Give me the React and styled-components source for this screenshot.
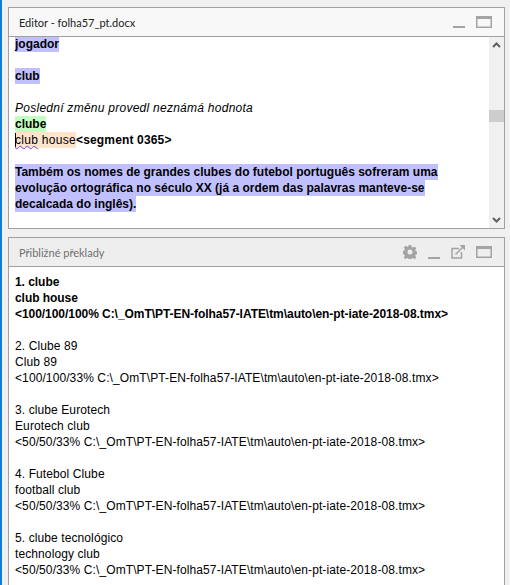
import styled, { createGlobalStyle } from 'styled-components';

const GlobalStyle = createGlobalStyle`
    html, body {
        margin: 0;
        padding: 0;
        background: #f0f0f0;
    }
`

const Page = styled.div`
    box-sizing: border-box;
    width: 510px;
    height: 585px;
    overflow: hidden;
    display: flex;
    flex-direction: column;
    gap: 8px;
    padding: 7px 5px 0 6px;
    border-left: 2px solid #0f7fd8;
    background: #f0f0f0;
    font-family: "Liberation Sans", Arial, sans-serif;
    font-size: 12px;
    color: #000;
`

const Panel = styled.section`
    box-sizing: border-box;
    flex: ${props => props.$grow ? '1 1 0' : '0 0 auto'};
    height: ${props => props.$height || 'auto'};
    display: flex;
    flex-direction: column;
    border: 1px solid #a0a0a0;
    border-bottom: ${props => props.$open ? 'none' : '1px solid #a0a0a0'};
    background: #fff;
    min-height: 0;
`

const PanelHeader = styled.header`
    box-sizing: border-box;
    flex: none;
    height: 29px;
    display: flex;
    align-items: center;
    padding: 0 12px 0 10px;
    border-bottom: 1px solid #a0a0a0;
    background: ${props => props.$active ? '#f8f8f8' : '#eeeeee'};
    color: ${props => props.$active ? '#222' : '#707070'};
    font-family: Lato, "Open Sans", sans-serif;
    font-size: 11px;
`

const PanelTitle = styled.span`
    flex: 1;
`

const Tools = styled.div`
    display: flex;
    align-items: center;
    gap: 11px;
`

const ToolIcon = styled.svg`
    display: block;
    flex: none;
    color: #a4a4a4;
`

const PanelBody = styled.div`
    flex: 1;
    min-height: 0;
    display: flex;
    overflow: hidden;
`

const EditorText = styled.div`
    flex: 1;
    margin-top: -1px;
    padding-left: 6px;
    line-height: 16px;
`

const Line = styled.div`
    height: 16px;
    white-space: nowrap;
    font-weight: ${props => props.$bold ? 700 : 400};
    font-style: ${props => props.$italic ? 'italic' : 'normal'};
    letter-spacing: ${props => props.$italic ? '0.26px' : '0'};
`

const Mark = styled.span`
    display: inline-block;
    height: 16px;
    background: ${props => props.$color};
`

const Current = styled.span`
    position: relative;
    display: inline-block;
    height: 16px;
    background: #ffe4cc;
    letter-spacing: 0.3px;
    &::before {
        content: '';
        position: absolute;
        left: 0;
        top: 1px;
        width: 1px;
        height: 14px;
        background: #000;
    }
`

const Misspelled = styled.span`
    text-decoration: underline wavy #6a50c0 1px;
`

const SegmentMarker = styled.b`
    letter-spacing: 0.15px;
`

const Gap = styled.div`
    height: 16px;
`

const Scrollbar = styled.div`
    flex: none;
    width: 15px;
    display: flex;
    flex-direction: column;
    justify-content: space-between;
    position: relative;
    background: #f0f0f0;
`

const Arrow = styled.svg`
    display: block;
    margin: 5px auto;
`

const Thumb = styled.div`
    position: absolute;
    left: 0;
    right: 0;
    top: ${props => props.$top}px;
    height: ${props => props.$height}px;
    background: #cdcdcd;
`

const MatchList = styled.div`
    flex: 1;
    padding: 7px 0 0 6px;
    line-height: 16px;
    white-space: nowrap;
    display: flex;
    flex-direction: column;
    gap: 16px;
`

const Match = styled.div`
    font-weight: ${props => props.$active ? 700 : 400};
    letter-spacing: ${props => props.$active ? '-0.05px' : '0.1px'};
`

const MinimizeIcon = () => (
    <ToolIcon width="12" height="12" viewBox="0 0 12 12" style={{ alignSelf: 'flex-end' }}>
        <rect x="0" y="10" width="12" height="2" fill="currentColor" />
    </ToolIcon>
)

const MaximizeIcon = () => (
    <ToolIcon width="16" height="12" viewBox="0 0 16 12">
        <rect x="0.75" y="0.75" width="14.5" height="10.5" fill="none" stroke="currentColor" strokeWidth="1.5" />
        <rect x="1" y="1" width="14" height="2" fill="currentColor" />
    </ToolIcon>
)

const GearIcon = () => (
    <ToolIcon width="14" height="14" viewBox="0 0 14 14">
        <path
            d="M5.8 0h2.400l.4 2 1.300.6 1.700-1.100 1.700 1.700-1.100 1.700.6 1.300 2 .4v2.400l-2 .4-.6 1.300 1.100 1.700-1.700 1.700-1.700-1.100-1.300.6-.4 2H5.800l-.4-2-1.300-.6-1.700 1.100-1.700-1.700 1.100-1.700-.6-1.300-2-.4V5.800l2-.4.6-1.300-1.100-1.700 1.700-1.700 1.700 1.100 1.300-.6z"
            fill="currentColor"
        />
        <circle cx="7" cy="7" r="2.500" fill="#eeeeee" />
    </ToolIcon>
)

const PopoutIcon = () => (
    <ToolIcon width="14" height="14" viewBox="0 0 14 14">
        <path d="M8 3.500H1v9.500h9.500V7" fill="none" stroke="currentColor" strokeWidth="1.500" />
        <path d="M4.500 9.500L12 2" fill="none" stroke="currentColor" strokeWidth="1.500" />
        <path d="M8.500 0H14v5.500z" fill="currentColor" />
    </ToolIcon>
)

const matches = [
    ['1. clube', 'club house', '<100/100/100% C:\\_OmT\\PT-EN-folha57-IATE\\tm\\auto\\en-pt-iate-2018-08.tmx>'],
    ['2. Clube 89', 'Club 89', '<100/100/33% C:\\_OmT\\PT-EN-folha57-IATE\\tm\\auto\\en-pt-iate-2018-08.tmx>'],
    ['3. clube Eurotech', 'Eurotech club', '<50/50/33% C:\\_OmT\\PT-EN-folha57-IATE\\tm\\auto\\en-pt-iate-2018-08.tmx>'],
    ['4. Futebol Clube', 'football club', '<50/50/33% C:\\_OmT\\PT-EN-folha57-IATE\\tm\\auto\\en-pt-iate-2018-08.tmx>'],
    ['5. clube tecnológico', 'technology club', '<50/50/33% C:\\_OmT\\PT-EN-folha57-IATE\\tm\\auto\\en-pt-iate-2018-08.tmx>'],
]

const paragraph = [
    'Também os nomes de grandes clubes do futebol português sofreram uma',
    'evolução ortográfica no século XX (já a ordem das palavras manteve-se',
    'decalcada do inglês).',
]

export default function App() {
    return (
        <>
            <GlobalStyle />
            <Page>
                <Panel $height="222px">
                    <PanelHeader $active>
                        <PanelTitle>Editor - folha57_pt.docx</PanelTitle>
                        <Tools>
                            <MinimizeIcon />
                            <MaximizeIcon />
                        </Tools>
                    </PanelHeader>
                    <PanelBody>
                        <EditorText>
                            <Line $bold><Mark $color="#c0c0ff">jogador</Mark></Line>
                            <Gap />
                            <Line $bold><Mark $color="#c0c0ff">club</Mark></Line>
                            <Gap />
                            <Line $italic>Poslední změnu provedl neznámá hodnota</Line>
                            <Line $bold><Mark $color="#c0ffc0">clube</Mark></Line>
                            <Line>
                                <Current><Misspelled>club</Misspelled> house</Current>
                                <SegmentMarker>&lt;segment 0365&gt;</SegmentMarker>
                            </Line>
                            <Gap />
                            {paragraph.map((text, index) =>
                                <Line $bold key={index}><Mark $color="#c0c0ff">{text}</Mark></Line>
                            )}
                        </EditorText>
                        <Scrollbar>
                            <Arrow width="9" height="6" viewBox="0 0 9 6">
                                <path d="M1 5l3.500-3.500L8 5" fill="none" stroke="#606060" strokeWidth="2" />
                            </Arrow>
                            <Thumb $top={73} $height={12} />
                            <Arrow width="9" height="6" viewBox="0 0 9 6">
                                <path d="M1 1l3.500 3.500L8 1" fill="none" stroke="#606060" strokeWidth="2" />
                            </Arrow>
                        </Scrollbar>
                    </PanelBody>
                </Panel>
                <Panel $grow $open>
                    <PanelHeader>
                        <PanelTitle>Přibližné překlady</PanelTitle>
                        <Tools>
                            <GearIcon />
                            <MinimizeIcon />
                            <PopoutIcon />
                            <MaximizeIcon />
                        </Tools>
                    </PanelHeader>
                    <PanelBody>
                        <MatchList>
                            {matches.map((match, index) =>
                                <Match $active={index === 0} key={index}>
                                    {match.map((text, row) => <div key={row}>{text}</div>)}
                                </Match>
                            )}
                        </MatchList>
                    </PanelBody>
                </Panel>
            </Page>
        </>
    )
}
